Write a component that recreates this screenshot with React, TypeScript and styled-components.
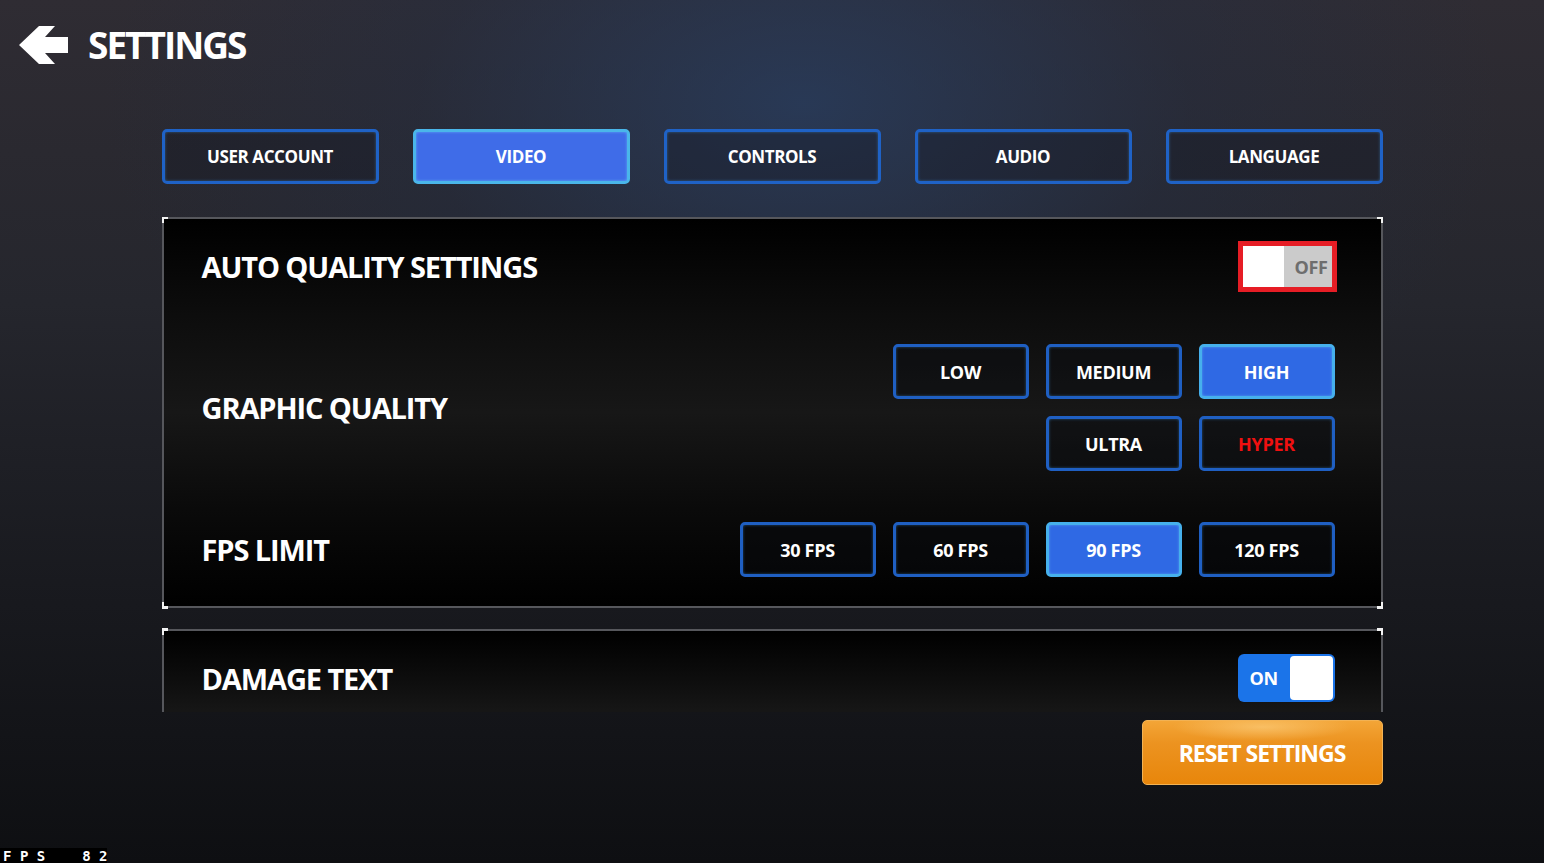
import { createGlobalStyle, styled } from 'styled-components';

const GlobalStyle = createGlobalStyle`
  html, body {
    margin: 0;
    padding: 0;
    width: 1544px;
    height: 863px;
    overflow: hidden;
  }
  body {
    font-family: "Open Sans", "Noto Sans", sans-serif;
    color: #fff;
    background: #15161b;
  }
  * {
    box-sizing: border-box;
  }
`;

const Page = styled.div`
  position: relative;
  width: 1544px;
  height: 863px;
  background:
    radial-gradient(ellipse 700px 420px at 52% 12%, rgba(40, 62, 98, 0.75) 0%, rgba(34, 46, 70, 0.35) 55%, transparent 100%),
    linear-gradient(180deg, #2f2c33 0%, #25262d 35%, #18191e 70%, #0e0f12 100%);
  display: flex;
  flex-direction: column;
`;

const Header = styled.header`
  display: flex;
  align-items: center;
  gap: 20px;
  padding: 25px 0 0 18px;
  height: 65px;
`;

const HeaderTitle = styled.h1`
  margin: 0;
  font-size: 37px;
  font-weight: 700;
  letter-spacing: -2px;
  line-height: 38px;
`;

const Content = styled.main`
  width: 1221px;
  margin: 64px auto 0;
  display: flex;
  flex-direction: column;
`;

const TabBar = styled.nav`
  display: flex;
  justify-content: space-between;
  height: 55px;
`;

const Tab = styled.button<{ $active?: boolean }>`
  width: 217px;
  height: 55px;
  border-radius: 5px;
  border: 3px solid ${(p) => (p.$active ? '#4ab6ea' : '#1f62c6')};
  background: ${(p) => (p.$active ? '#3f6ce8' : 'rgba(20, 24, 34, 0.35)')};
  box-shadow: inset 0 0 3px ${(p) => (p.$active ? 'rgba(120,210,255,0.6)' : 'rgba(70,160,240,0.45)')};
  color: #fff;
  font-family: "Open Sans", sans-serif;
  font-size: 17px;
  font-weight: 700;
  letter-spacing: -0.4px;
  padding: 0;
`;

const ScrollArea = styled.div`
  margin-top: 33px;
  height: 495px;
  overflow: hidden;
  display: flex;
  flex-direction: column;
  gap: 21px;
`;

const Panel = styled.section<{ $open?: boolean }>`
  position: relative;
  flex-shrink: 0;
  border: 2px solid #56575c;
  border-bottom: ${(p) => (p.$open ? 'none' : '2px solid #56575c')};
  background: ${(p) =>
    p.$open
      ? 'linear-gradient(180deg, #000 0%, #0b0b0b 40%, #1c1c1c 100%)'
      : 'linear-gradient(180deg, #000 0%, #0d0d0d 25%, #171717 50%, #0a0a0a 75%, #000 100%)'};
  padding: ${(p) => (p.$open ? '23px 46px 30px 38px' : '22px 46px 29px 38px')};
  display: flex;
  flex-direction: column;
  gap: 52px;
`;

const Corner = styled.span<{ $v: 'top' | 'bottom'; $h: 'left' | 'right' }>`
  position: absolute;
  width: 7px;
  height: 7px;
  ${(p) => p.$v}: -3px;
  ${(p) => p.$h}: -3px;
  border-${(p) => p.$v}: 3px solid #f2f2f2;
  border-${(p) => p.$h}: 3px solid #f2f2f2;
`;

const Row = styled.div<{ $gapBefore?: number }>`
  display: flex;
  align-items: center;
  justify-content: space-between;
  ${(p) => (p.$gapBefore !== undefined ? `margin-top: ${p.$gapBefore - 52}px;` : '')}
`;

const Label = styled.h2`
  margin: 0;
  font-size: 29px;
  font-weight: 700;
  letter-spacing: -1.1px;
  color: #fff;
`;

const QualityGrid = styled.div`
  display: grid;
  grid-template-columns: repeat(3, 136px);
  column-gap: 17px;
  row-gap: 17px;
`;

const FpsGroup = styled.div`
  display: flex;
  gap: 17px;
`;

const Option = styled.button<{ $active?: boolean; $danger?: boolean; $col?: number }>`
  width: 136px;
  height: 55px;
  border-radius: 5px;
  border: 3px solid ${(p) => (p.$active ? '#46b0ec' : '#1f5fc2')};
  background: ${(p) => (p.$active ? '#2f69e4' : 'rgba(10, 12, 18, 0.4)')};
  box-shadow: inset 0 0 3px ${(p) => (p.$active ? 'rgba(120,210,255,0.5)' : 'rgba(70,160,240,0.45)')};
  color: ${(p) => (p.$danger ? '#f01010' : '#fff')};
  font-family: "Open Sans", sans-serif;
  font-size: 18px;
  font-weight: 700;
  letter-spacing: -0.3px;
  padding: 0;
  ${(p) => (p.$col ? `grid-column: ${p.$col};` : '')}
`;

const OffToggle = styled.div`
  width: 99px;
  height: 51px;
  margin-right: -2px;
  border: 5px solid #e61d25;
  display: flex;
  background: #cbcbcb;
`;

const OffKnob = styled.div`
  width: 41px;
  background: #fff;
`;

const OffText = styled.span`
  flex: 1;
  display: flex;
  align-items: center;
  justify-content: flex-end;
  padding-right: 4px;
  font-size: 18px;
  font-weight: 700;
  letter-spacing: -0.4px;
  color: #6e6e6e;
`;

const OnToggle = styled.div`
  width: 97px;
  height: 48px;
  border-radius: 6px;
  background: #1b74e9;
  display: flex;
  align-items: center;
  justify-content: space-between;
  padding: 2px 2px 2px 12px;
`;

const OnText = styled.span`
  font-size: 18px;
  font-weight: 700;
  letter-spacing: -0.4px;
  color: #fff;
`;

const OnKnob = styled.div`
  width: 43px;
  height: 44px;
  border-radius: 4px;
  background: #fff;
`;

const Footer = styled.div`
  display: flex;
  justify-content: flex-end;
  margin-top: 8px;
`;

const ResetButton = styled.button`
  width: 241px;
  height: 65px;
  border-radius: 5px;
  border: 1px solid #f2b254;
  background:
    radial-gradient(ellipse 90px 14px at 50% 6px, rgba(255, 215, 140, 0.55), transparent),
    linear-gradient(180deg, #f3a537 0%, #ec9320 35%, #e8860b 100%);
  color: #fff;
  font-family: "Open Sans", sans-serif;
  font-size: 23px;
  font-weight: 700;
  letter-spacing: -1px;
  padding: 0;
`;

const FpsCounter = styled.div`
  position: absolute;
  left: 0;
  bottom: 0;
  width: 107px;
  height: 15px;
  background: #000;
  color: #fff;
  font-family: "DejaVu Sans Mono", monospace;
  font-size: 14px;
  font-weight: 700;
  line-height: 16px;
  display: flex;
  justify-content: space-between;
  padding-left: 3px;
`;

const FpsWord = styled.span`
  letter-spacing: 8.5px;
`;

const FpsValue = styled.span`
  letter-spacing: 8.5px;
  margin-right: -9px;
`;

const BackArrow = () => (
  <svg width="50" height="38" viewBox="0 0 50 38" fill="#fff">
    <path d="M1 19 L21 0 L37 0 L27 11 L50 11 L50 27 L27 27 L37 38 L21 38 Z" />
  </svg>
);

const tabs = ['USER ACCOUNT', 'VIDEO', 'CONTROLS', 'AUDIO', 'LANGUAGE'];
const fpsOptions = ['30 FPS', '60 FPS', '90 FPS', '120 FPS'];

function Corners({ open }: { open?: boolean }) {
  return (
    <>
      <Corner $v="top" $h="left" />
      <Corner $v="top" $h="right" />
      {!open && <Corner $v="bottom" $h="left" />}
      {!open && <Corner $v="bottom" $h="right" />}
    </>
  );
}

export default function App() {
  return (
    <Page>
      <GlobalStyle />
      <Header>
        <BackArrow />
        <HeaderTitle>SETTINGS</HeaderTitle>
      </Header>
      <Content>
        <TabBar>
          {tabs.map((t) => (
            <Tab key={t} $active={t === 'VIDEO'}>
              {t}
            </Tab>
          ))}
        </TabBar>
        <ScrollArea>
          <Panel>
            <Corners />
            <Row>
              <Label>AUTO QUALITY SETTINGS</Label>
              <OffToggle>
                <OffKnob />
                <OffText>OFF</OffText>
              </OffToggle>
            </Row>
            <Row>
              <Label>GRAPHIC QUALITY</Label>
              <QualityGrid>
                <Option>LOW</Option>
                <Option>MEDIUM</Option>
                <Option $active>HIGH</Option>
                <Option $col={2}>ULTRA</Option>
                <Option $danger>HYPER</Option>
              </QualityGrid>
            </Row>
            <Row $gapBefore={51}>
              <Label>FPS LIMIT</Label>
              <FpsGroup>
                {fpsOptions.map((f) => (
                  <Option key={f} $active={f === '90 FPS'}>
                    {f}
                  </Option>
                ))}
              </FpsGroup>
            </Row>
          </Panel>
          <Panel $open>
            <Corners open />
            <Row>
              <Label>DAMAGE TEXT</Label>
              <OnToggle>
                <OnText>ON</OnText>
                <OnKnob />
              </OnToggle>
            </Row>
          </Panel>
        </ScrollArea>
        <Footer>
          <ResetButton>RESET SETTINGS</ResetButton>
        </Footer>
      </Content>
      <FpsCounter>
        <FpsWord>FPS</FpsWord>
        <FpsValue>82</FpsValue>
      </FpsCounter>
    </Page>
  );
}
